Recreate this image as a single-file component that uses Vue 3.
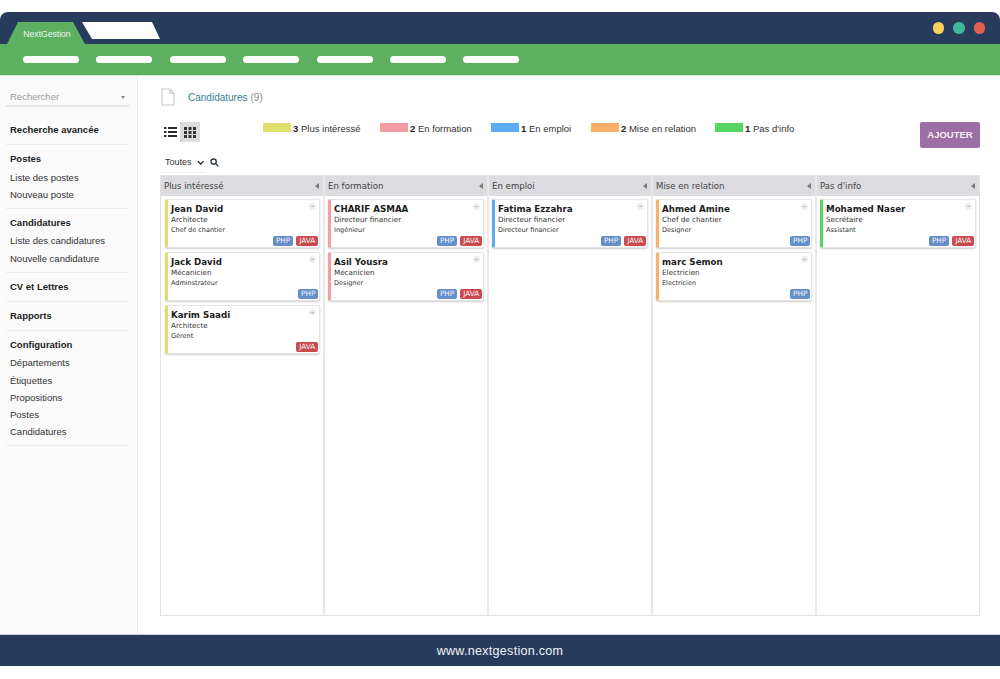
<script setup>
const pills = [1, 2, 3, 4, 5, 6, 7]
const legend = [
  { n: 3, label: 'Plus intéressé', color: '#dde06f', w: 117 },
  { n: 2, label: 'En formation', color: '#f49ea2', w: 111 },
  { n: 1, label: 'En emploi', color: '#5dabf0', w: 100 },
  { n: 2, label: 'Mise en relation', color: '#fbb069', w: 124 },
  { n: 1, label: "Pas d'info", color: '#55d662', w: 90 }
]
const columns = [
  { title: 'Plus intéressé', color: '#dde06f', cards: [
    { name: 'Jean David', a: 'Architecte', b: 'Chef de chantier', php: true, java: true },
    { name: 'Jack David', a: 'Mécanicien', b: 'Adminstrateur', php: true },
    { name: 'Karim Saadi', a: 'Architecte', b: 'Gérent', java: true }
  ] },
  { title: 'En formation', color: '#f49ea2', cards: [
    { name: 'CHARIF ASMAA', a: 'Directeur financier', b: 'Ingénieur', php: true, java: true },
    { name: 'Asil Yousra', a: 'Mécanicien', b: 'Designer', php: true, java: true }
  ] },
  { title: 'En emploi', color: '#5dabf0', cards: [
    { name: 'Fatima Ezzahra', a: 'Directeur financier', b: 'Directeur financier', php: true, java: true }
  ] },
  { title: 'Mise en relation', color: '#fbb069', cards: [
    { name: 'Ahmed Amine', a: 'Chef de chantier', b: 'Designer', php: true },
    { name: 'marc Semon', a: 'Electricien', b: 'Electricien', php: true }
  ] },
  { title: "Pas d'info", color: '#55d662', cards: [
    { name: 'Mohamed Naser', a: 'Secrétaire', b: 'Assistant', php: true, java: true }
  ] }
]
const menu = [
  { head: 'Recherche avancée', items: [] },
  { head: 'Postes', items: ['Liste des postes', 'Nouveau poste'] },
  { head: 'Candidatures', items: ['Liste des candidatures', 'Nouvelle candidature'] },
  { head: 'CV et Lettres', items: [] },
  { head: 'Rapports', items: [] },
  { head: 'Configuration', items: ['Départements', 'Étiquettes', 'Propositions', 'Postes', 'Candidatures'] }
]
</script>

<template>
  <div class="page">
    <header class="topbar">
      <div class="tabs">
        <div class="tab-active">NextGestion</div>
        <div class="tab-blank"></div>
      </div>
      <div class="dots">
        <span class="dot yellow"></span>
        <span class="dot teal"></span>
        <span class="dot red"></span>
      </div>
    </header>
    <nav class="navbar">
      <span v-for="p in pills" :key="p" class="pill"></span>
    </nav>

    <div class="main">
      <aside class="sidebar">
        <div class="search">
          <span>Rechercher</span>
          <span class="caret"></span>
        </div>
        <section v-for="m in menu" :key="m.head" class="section">
          <div class="head">{{ m.head }}</div>
          <div v-for="i in m.items" :key="i" class="item">{{ i }}</div>
        </section>
      </aside>

      <main class="content">
        <div class="title-row">
          <svg class="file" width="14" height="18" viewBox="0 0 14 18" fill="none" stroke="#c9c9c9" stroke-width="1.2">
            <path d="M1 1h8l4 4.5V17H1z" />
            <path d="M9 1v4.5h4" />
          </svg>
          <span class="title">Candidatures</span>
          <span class="count">(9)</span>
        </div>

        <div class="tools-row">
          <div class="views">
            <svg class="list-icon" width="13" height="12" viewBox="0 0 13 12" fill="#2b2b2b">
              <rect x="0" y="1" width="2.5" height="2" />
              <rect x="4" y="1" width="9" height="2" />
              <rect x="0" y="5" width="2.5" height="2" />
              <rect x="4" y="5" width="9" height="2" />
              <rect x="0" y="9" width="2.5" height="2" />
              <rect x="4" y="9" width="9" height="2" />
            </svg>
            <span class="grid-box">
              <svg width="12" height="11" viewBox="0 0 12 11" fill="#333">
                <rect x="0" y="0" width="3" height="3" />
                <rect x="4.5" y="0" width="3" height="3" />
                <rect x="9" y="0" width="3" height="3" />
                <rect x="0" y="4" width="3" height="3" />
                <rect x="4.5" y="4" width="3" height="3" />
                <rect x="9" y="4" width="3" height="3" />
                <rect x="0" y="8" width="3" height="3" />
                <rect x="4.5" y="8" width="3" height="3" />
                <rect x="9" y="8" width="3" height="3" />
              </svg>
            </span>
          </div>
          <div class="legend">
            <div v-for="l in legend" :key="l.label" class="legend-item" :style="{ width: l.w + 'px' }">
              <span class="swatch" :style="{ background: l.color }"></span>
              <span class="legend-text"><b>{{ l.n }}</b> {{ l.label }}</span>
            </div>
          </div>
          <button class="add">AJOUTER</button>
        </div>

        <div class="filter-row">
          <div class="select">
            <span>Toutes</span>
            <svg width="8" height="6" viewBox="0 0 8 6" fill="none" stroke="#222" stroke-width="1.4">
              <path d="M1 1.2l3 3 3-3" />
            </svg>
          </div>
          <svg class="search-icon" width="9" height="9" viewBox="0 0 10 10" fill="none" stroke="#2b3a44" stroke-width="1.5">
            <circle cx="4" cy="4" r="2.9" />
            <path d="M6.2 6.2L9.3 9.3" />
          </svg>
        </div>

        <div class="board">
          <div v-for="c in columns" :key="c.title" class="column">
            <div class="col-head">
              <span>{{ c.title }}</span>
              <span class="col-arrow"></span>
            </div>
            <div class="cards">
              <article v-for="k in c.cards" :key="k.name" class="card" :style="{ borderLeftColor: c.color }">
                <svg class="card-icon" width="7" height="7" viewBox="0 0 7 7">
                  <circle cx="3.5" cy="3.5" r="3.5" fill="#f0f0f0" />
                  <path d="M1.5 3h2V2l2 1.5-2 1.5V4h-2z" fill="#c4c4c4" />
                </svg>
                <div class="name">{{ k.name }}</div>
                <div class="job">{{ k.a }}</div>
                <div class="role">{{ k.b }}</div>
                <div class="tags">
                  <span v-if="k.php" class="tag php">PHP</span>
                  <span v-if="k.java" class="tag java">JAVA</span>
                </div>
              </article>
            </div>
          </div>
        </div>
      </main>
    </div>

    <footer class="footer">www.nextgestion.com</footer>
  </div>
</template>

<style>
html, body { margin: 0; background: #fff; }
</style>

<style scoped>
* { box-sizing: border-box; }
.page {
  width: 1000px;
  height: 679px;
  padding: 12px 0 13px;
  display: flex;
  flex-direction: column;
  font-family: "Liberation Sans", Arial, sans-serif;
  overflow: hidden;
  background: #fff;
}
.topbar {
  height: 32px;
  flex: none;
  background: #273c5c;
  border-radius: 8px 8px 0 0;
  display: flex;
  justify-content: space-between;
  padding: 10px 15px 0 7px;
}
.tabs { display: flex; }
.tab-active {
  width: 78px;
  height: 22px;
  background: #5cb05f;
  color: #eef6ee;
  font-size: 8.6px;
  line-height: 25px;
  text-align: center;
  padding-left: 2px;
  clip-path: polygon(0 100%, 11px 0, 66px 0, 100% 100%);
}
.tab-blank {
  width: 78px;
  height: 17px;
  margin-left: -3px;
  background: #fff;
  clip-path: polygon(0 0, 70px 0, 100% 100%, 10px 100%);
}
.dots { display: flex; gap: 9px; }
.dot { width: 11.5px; height: 11.5px; border-radius: 50%; }
.yellow { background: #f9cf5c; }
.teal { background: #3fb99b; }
.red { background: #e2604f; }
.navbar {
  height: 32px;
  flex: none;
  background: #5cb05f;
  border-bottom: 1px solid #d6e8d6;
  display: flex;
  align-items: center;
  gap: 17.4px;
  padding-left: 23px;
}
.pill { width: 56px; height: 7px; border-radius: 4px; background: #fff; }
.main { flex: 1; display: flex; min-height: 0; }
.sidebar {
  width: 138px;
  flex: none;
  background: #fafafa;
  border-right: 1px solid #ececec;
  padding: 14px 8px 0 6px;
}
.search {
  height: 17px;
  margin-bottom: 9px;
  border-bottom: 2px solid #e4e4e4;
  display: flex;
  justify-content: space-between;
  align-items: flex-start;
  padding: 0 4px;
  font-size: 9.5px;
  line-height: 14px;
  color: #9a9a9a;
}
.caret {
  margin-top: 6px;
  border-left: 2.5px solid transparent;
  border-right: 2.5px solid transparent;
  border-top: 3px solid #888;
}
.section {
  border-bottom: 1px solid #ececec;
  padding: 7px 4px 7px;
}
.head {
  font-size: 9.5px;
  font-weight: 700;
  color: #222;
  line-height: 14px;
}
.item {
  font-size: 9.5px;
  color: #333;
  line-height: 17.2px;
}
.head + .item { margin-top: 2.5px; }
.item:last-child { margin-bottom: -2px; }
.content {
  flex: 1;
  min-width: 0;
  padding: 12px 20px 18px 22px;
  display: flex;
  flex-direction: column;
}
.title-row {
  height: 18px;
  display: flex;
  align-items: center;
  padding-left: 1px;
  font-size: 10px;
}
.file { flex: none; }
.title { margin-left: 13px; color: #35828c; }
.count { margin-left: 3px; color: #888; }
.tools-row {
  margin-top: 16px;
  height: 26px;
  display: flex;
  align-items: flex-start;
}
.views { display: flex; align-items: center; height: 20px; padding-left: 4px; }
.list-icon { flex: none; }
.grid-box {
  width: 20px;
  height: 20px;
  margin-left: 3px;
  background: #dcdcdc;
  display: flex;
  align-items: center;
  justify-content: center;
}
.legend { display: flex; margin-left: 63px; width: 657px; }
.legend-item { display: flex; align-items: flex-start; flex: none; }
.swatch { width: 28px; height: 9px; margin-top: 1px; flex: none; }
.legend-text { margin-left: 2px; font-size: 9.5px; line-height: 13px; color: #333; white-space: nowrap; }
.legend-text b { color: #222; }
.add {
  width: 60px;
  height: 26px;
  margin-left: auto;
  border: 0;
  border-radius: 2px;
  background: #9b6fa5;
  color: #f5eef6;
  font-family: inherit;
  font-size: 9.5px;
  font-weight: 700;
  padding: 0 0 2px;
}
.filter-row {
  margin-top: 7px;
  height: 20px;
  display: flex;
  align-items: flex-start;
}
.select {
  width: 44px;
  height: 18px;
  border-bottom: 1px solid #ececec;
  display: flex;
  align-items: flex-start;
  gap: 5px;
  padding-left: 5px;
  font-size: 9px;
  line-height: 14px;
  color: #333;
}
.select svg { margin-top: 5px; }
.search-icon { margin: 3px 0 0 6px; }
.board {
  flex: 1;
  min-height: 0;
  display: grid;
  grid-template-columns: repeat(4, 164px) 1fr;
  border: 1px solid #e2e2e2;
}
.column { border-right: 2px solid #e8e8e8; min-width: 0; }
.column:last-child { border-right: 0; }
.col-head {
  height: 20px;
  background: #dcdce0;
  display: flex;
  align-items: center;
  justify-content: space-between;
  padding: 0 4px 0 3px;
  font-family: "DejaVu Sans", Verdana, sans-serif;
  font-size: 8.6px;
  color: #444;
}
.col-arrow {
  border-top: 3px solid transparent;
  border-bottom: 3px solid transparent;
  border-right: 4px solid #777;
}
.cards {
  display: flex;
  flex-direction: column;
  gap: 4px;
  padding: 3px 2.7px 0 3px;
}
.column:first-child .cards { padding-left: 4px; }
.card {
  position: relative;
  height: 49px;
  border: 1px solid #e4e4e4;
  border-left: 3px solid;
  border-radius: 2px;
  background: #fff;
  box-shadow: 0 1px 2px rgba(0, 0, 0, 0.2);
  padding: 3px 1px 0 3px;
  font-family: "DejaVu Sans", Verdana, sans-serif;
}
.card-icon { position: absolute; top: 3px; right: 3px; }
.name {
  font-size: 8.7px;
  font-weight: 700;
  line-height: 13px;
  color: #1c1c1c;
  white-space: nowrap;
}
.job { font-size: 7.2px; line-height: 11px; margin-top: -2px; color: #333; }
.role { font-size: 6.5px; line-height: 10.5px; color: #333; }
.tags {
  display: flex;
  justify-content: flex-end;
  gap: 3px;
  margin-top: 0.5px;
}
.tag {
  height: 9.5px;
  border-radius: 2px;
  padding: 0 3px;
  font-size: 7.3px;
  line-height: 9.5px;
  color: #f2f4f8;
}
.php { background: #648fcb; }
.java { background: #c9494f; }
.footer {
  height: 32px;
  flex: none;
  background: #273c5c;
  border-top: 1px solid #d0d4da;
  color: #f1f3f6;
  font-size: 12.5px;
  letter-spacing: 0.3px;
  display: flex;
  align-items: center;
  justify-content: center;
}
</style>
